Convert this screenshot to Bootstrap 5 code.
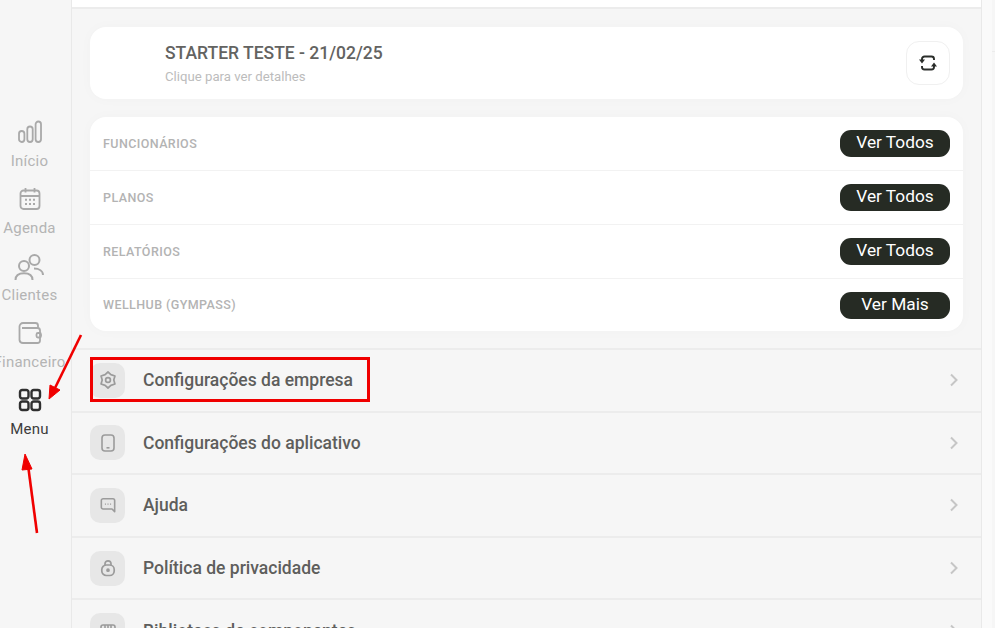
<!DOCTYPE html>
<html lang="pt-BR">
<head>
    <meta charset="UTF-8">
    <meta name="viewport" content="width=device-width, initial-scale=1.0">
    <title>Menu</title>
    <link href="https://cdn.jsdelivr.net/npm/bootstrap@5.3.3/dist/css/bootstrap.min.css" rel="stylesheet">
    <style>
        html, body {
            height: 100%;
            overflow: hidden;
        }
        body {
            background: #f6f6f6;
            font-family: Roboto, "Liberation Sans", sans-serif;
        }
        .app-shell {
            width: 995px;
            height: 628px;
            overflow: hidden;
            position: relative;
        }
        .side-rail {
            width: 72px;
            flex: none;
            padding-top: 120px;
            border-right: 1px solid #e9e9e9;
        }
        .rail-item {
            height: 67px;
            width: 59px;
            color: #b4b4b4;
            font-size: 15px;
            line-height: 17px;
            letter-spacing: .25px;
            white-space: nowrap;
        }
        .rail-item svg {
            height: 24px;
            width: 24px;
            margin-bottom: 9px;
            flex: none;
        }
        .rail-item.is-active {
            color: #3c3c3c;
        }
        .main-col {
            width: 910px;
            flex: none;
            border-right: 1px solid #e9e9e9;
        }
        .top-strip {
            height: 9px;
            background: #fff;
            border-bottom: 2px solid #ececec;
        }
        .white-box {
            background: #fff;
            border-radius: 16px;
            margin: 0 18px;
            box-shadow: 0 0 14px rgba(0, 0, 0, .025);
        }
        .plan-box {
            height: 72px;
            margin-top: 18px;
            padding: 0 13px 0 75px;
        }
        .plan-title {
            font-size: 17.5px;
            font-weight: 500;
            line-height: 20px;
            color: #636361;
        }
        .plan-sub {
            font-size: 13.2px;
            line-height: 15px;
            color: #bcbcbc;
            margin-top: 6px;
        }
        .swap-btn {
            width: 44px;
            height: 44px;
            border: 1px solid #f0f0f0;
            border-radius: 13px;
            background: #fff;
            padding: 0;
        }
        .links-box {
            margin-top: 18px;
            height: 214px;
        }
        .link-row {
            height: 54px;
            padding: 0 13px;
            border-bottom: 1px solid #f2f2f2;
        }
        .link-row:last-child {
            border-bottom: 0;
            height: 52px;
        }
        .link-label {
            font-size: 12.5px;
            font-weight: 500;
            letter-spacing: .42px;
            color: #b3b3b3;
            margin-top: 1px;
        }
        .dark-pill {
            width: 110px;
            height: 27px;
            padding: 0 0 2px;
            border: 0;
            border-radius: 11px;
            background: #262b24;
            color: #fff;
            font-size: 17.3px;
            line-height: 25px;
        }
        .menu-list {
            margin-top: 17px;
            border-top: 2px solid #ececec;
        }
        .menu-row {
            height: 62.6px;
            padding: 0 18px;
            border-bottom: 2px solid #ececec;
            flex: none;
        }
        .menu-ico {
            width: 35px;
            height: 35px;
            border-radius: 10px;
            background: #e7e7e7;
            flex: none;
        }
        .menu-text {
            margin-left: 18px;
            font-size: 17.5px;
            font-weight: 500;
            color: #5e5e5c;
        }
        .row-chevron {
            margin-left: auto;
            margin-right: 5px;
        }
        .scroll-band {
            width: 10px;
            flex: none;
            background: #fafafa;
        }
        .scroll-gutter {
            flex: 1;
            height: 52px;
            border-bottom: 1px solid #ececec;
        }
        .mark-box {
            position: absolute;
            left: 90px;
            top: 357px;
            width: 280px;
            height: 45px;
            border: 3px solid #f00000;
        }
        .arrow-layer {
            position: absolute;
            left: 0;
            top: 0;
        }
    </style>
</head>
<body>
    <div class="app-shell d-flex">
        <nav class="side-rail d-flex flex-column">
            <div class="rail-item d-flex flex-column align-items-center">
                <svg viewBox="0 0 24 24" fill="none" stroke="#a9a9a9" stroke-width="1.8"><rect x="1" y="11" width="5.4" height="11" rx="2.7"/><rect x="9.3" y="6.500" width="5.4" height="15.500" rx="2.7"/><rect x="17.600" y="1.500" width="5.400" height="20.500" rx="2.700"/></svg>
                <span>Início</span>
            </div>
            <div class="rail-item d-flex flex-column align-items-center">
                <svg viewBox="0 0 24 24" fill="none" stroke="#a9a9a9" stroke-width="1.8"><rect x="2.500" y="3.500" width="19" height="18.500" rx="3"/><path d="M2.500 9h19M7.500 1v4.500M16.500 1v4.500"/><path d="M7 12.800h2M11 12.800h2M15 12.800h2M7 17h2M11 17h2M15 17h2" stroke-width="1.900"/></svg>
                <span>Agenda</span>
            </div>
            <div class="rail-item d-flex flex-column align-items-center">
                <svg viewBox="0 0 30 27" style="width:30px;height:27px;margin-bottom:6px;margin-left:-1px" fill="none" stroke="#a9a9a9" stroke-width="2"><circle cx="10" cy="12" r="5"/><circle cx="20.500" cy="6" r="5"/><path d="M1.500 26c0-4.500 3.500-6.800 8.500-6.800s8.500 2.300 8.500 6.800M20 14.500c5 0 9 2.400 9 6.500"/></svg>
                <span>Clientes</span>
            </div>
            <div class="rail-item d-flex flex-column align-items-center">
                <svg viewBox="0 0 24 24" fill="none" stroke="#a9a9a9" stroke-width="1.800"><path d="M20 7V4.500A2.500 2.500 0 0 0 17.500 2H5a3.500 3.500 0 0 0-3.500 3.500V19A3.500 3.500 0 0 0 5 22h14.500a2.500 2.500 0 0 0 2.500-2.500V9.500A2.500 2.500 0 0 0 19.500 7H4"/><rect x="18.500" y="12" width="4.500" height="4.500" rx="1.500"/></svg>
                <span>Financeiro</span>
            </div>
            <div class="rail-item is-active d-flex flex-column align-items-center">
                <svg viewBox="0 0 24 24" fill="none" stroke="#2f2f2f" stroke-width="2.400"><rect x="2" y="2" width="8.500" height="8.500" rx="2.200"/><rect x="13.500" y="2" width="8.500" height="8.500" rx="2.200"/><rect x="2" y="13.500" width="8.500" height="8.500" rx="2.200"/><rect x="13.500" y="13.500" width="8.500" height="8.500" rx="2.200"/></svg>
                <span>Menu</span>
            </div>
        </nav>

        <main class="main-col">
            <div class="top-strip"></div>

            <div class="white-box plan-box d-flex align-items-center justify-content-between">
                <div>
                    <div class="plan-title">STARTER TESTE - 21/02/25</div>
                    <div class="plan-sub">Clique para ver detalhes</div>
                </div>
                <button class="swap-btn d-flex align-items-center justify-content-center" type="button" aria-label="Trocar">
                    <svg width="18" height="16" viewBox="0 0 18 16" fill="none" stroke="#2a2d2a" stroke-width="1.900"><path d="M3 5V4A2.500 2.500 0 0 1 5.500 1.500h7A2.500 2.500 0 0 1 15 4v1"/><path d="M15 11v1a2.500 2.500 0 0 1-2.500 2.500h-7A2.500 2.500 0 0 1 3 12v-1"/><path d="M0 4.500h6l-3 4zM12 11.500h6l-3-4z" fill="#2a2d2a" stroke="none"/></svg>
                </button>
            </div>

            <div class="white-box links-box">
                <div class="link-row d-flex align-items-center justify-content-between">
                    <span class="link-label">FUNCIONÁRIOS</span>
                    <button class="dark-pill" type="button">Ver Todos</button>
                </div>
                <div class="link-row d-flex align-items-center justify-content-between">
                    <span class="link-label">PLANOS</span>
                    <button class="dark-pill" type="button">Ver Todos</button>
                </div>
                <div class="link-row d-flex align-items-center justify-content-between">
                    <span class="link-label">RELATÓRIOS</span>
                    <button class="dark-pill" type="button">Ver Todos</button>
                </div>
                <div class="link-row d-flex align-items-center justify-content-between">
                    <span class="link-label">WELLHUB (GYMPASS)</span>
                    <button class="dark-pill" type="button">Ver Mais</button>
                </div>
            </div>

            <div class="menu-list d-flex flex-column">
                <div class="menu-row d-flex align-items-center">
                    <div class="menu-ico d-flex align-items-center justify-content-center">
                        <svg width="18" height="18" viewBox="0 0 18 18" fill="none" stroke="#9b9b9b" stroke-width="1.700" stroke-linejoin="round"><path d="M9 1l2.900 2.600L15.930 5 14.800 9l1.130 4-4.030 1.400L9 17l-2.900-2.600L2.070 13 3.200 9 2.070 5 6.100 3.600z"/><circle cx="9" cy="9" r="2.400"/></svg>
                    </div>
                    <span class="menu-text">Configurações da empresa</span>
                    <svg class="row-chevron" width="8" height="14" viewBox="0 0 8 14" fill="none" stroke="#c6c6c6" stroke-width="2"><path d="M1 1.500L6.500 7 1 12.500"/></svg>
                </div>
                <div class="menu-row d-flex align-items-center">
                    <div class="menu-ico d-flex align-items-center justify-content-center">
                        <svg width="18" height="18" viewBox="0 0 18 18" fill="none" stroke="#9b9b9b" stroke-width="1.600"><rect x="3" y="1" width="12" height="16" rx="3"/><path d="M7.500 13.800h3"/></svg>
                    </div>
                    <span class="menu-text">Configurações do aplicativo</span>
                    <svg class="row-chevron" width="8" height="14" viewBox="0 0 8 14" fill="none" stroke="#c6c6c6" stroke-width="2"><path d="M1 1.500L6.500 7 1 12.500"/></svg>
                </div>
                <div class="menu-row d-flex align-items-center">
                    <div class="menu-ico d-flex align-items-center justify-content-center">
                        <svg width="16" height="16" viewBox="0 0 18 18" fill="none" stroke="#9b9b9b" stroke-width="1.800" stroke-linejoin="round"><path d="M3.500 2h11a2 2 0 0 1 2 2v12.500l-3-3h-10a2 2 0 0 1-2-2V4a2 2 0 0 1 2-2z"/><path d="M5.500 8h1.200M8.400 8h1.200M11.300 8h1.200" stroke-width="1.500"/></svg>
                    </div>
                    <span class="menu-text">Ajuda</span>
                    <svg class="row-chevron" width="8" height="14" viewBox="0 0 8 14" fill="none" stroke="#c6c6c6" stroke-width="2"><path d="M1 1.500L6.500 7 1 12.500"/></svg>
                </div>
                <div class="menu-row d-flex align-items-center">
                    <div class="menu-ico d-flex align-items-center justify-content-center">
                        <svg width="18" height="18" viewBox="0 0 18 18" fill="none" stroke="#9b9b9b" stroke-width="1.700"><rect x="2.800" y="6" width="12.400" height="10.500" rx="4.500"/><path d="M6 6.500V4.800a3 3 0 0 1 6 0v1.700"/><circle cx="9" cy="11.200" r="1" fill="#9b9b9b"/></svg>
                    </div>
                    <span class="menu-text">Política de privacidade</span>
                    <svg class="row-chevron" width="8" height="14" viewBox="0 0 8 14" fill="none" stroke="#c6c6c6" stroke-width="2"><path d="M1 1.500L6.500 7 1 12.500"/></svg>
                </div>
                <div class="menu-row d-flex align-items-center">
                    <div class="menu-ico d-flex align-items-center justify-content-center">
                        <svg width="18" height="18" viewBox="0 0 18 18" fill="none" stroke="#9b9b9b" stroke-width="1.600"><rect x="2" y="3" width="14" height="12" rx="2"/><path d="M2 7h14M6 3v4M9 3v4M12 3v4"/></svg>
                    </div>
                    <span class="menu-text">Biblioteca de componentes</span>
                    <svg class="row-chevron" width="8" height="14" viewBox="0 0 8 14" fill="none" stroke="#c6c6c6" stroke-width="2"><path d="M1 1.500L6.500 7 1 12.500"/></svg>
                </div>
            </div>
        </main>
        <div class="scroll-band"></div>
        <div class="scroll-gutter"></div>

        <div class="mark-box"></div>
        <svg class="arrow-layer" width="995" height="628" fill="#f00000" stroke="#f00000">
            <path d="M81 335L55 388" stroke-width="2.600"/>
            <path d="M49 399L50 385 60 390z"/>
            <path d="M37 533L28 465" stroke-width="2.600"/>
            <path d="M25 454L22 470 32 469z"/>
        </svg>
    </div>

    <script src="https://cdn.jsdelivr.net/npm/bootstrap@5.3.3/dist/js/bootstrap.bundle.min.js"></script>
</body>
</html>
